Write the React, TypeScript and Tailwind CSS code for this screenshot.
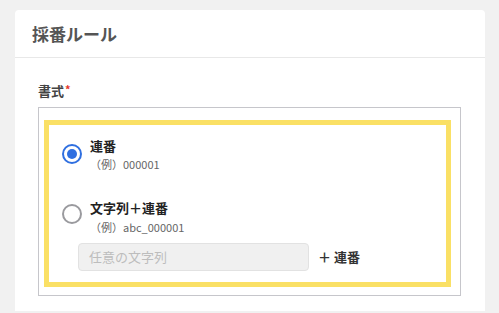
import React from 'react'

const font = { fontFamily: '"Noto Sans CJK JP", "Noto Sans", sans-serif' }

function Radio({ checked }: { checked?: boolean }) {
  return checked ? (
    <div className="w-[20px] h-[20px] rounded-full border-2 border-[#2f6fe0] flex items-center justify-center shrink-0">
      <div className="w-[10px] h-[10px] rounded-full bg-[#2f6fe0]" />
    </div>
  ) : (
    <div className="w-[20px] h-[20px] rounded-full border-2 border-[#9a9a9e] shrink-0" />
  )
}

export default function App() {
  return (
    <div className="w-[499px] h-[313px] bg-[#f1f1f1] pt-[10px] pl-[15px] pr-[14px] overflow-hidden" style={font}>
      <div className="bg-white rounded-t-[4px] h-[301px]">
        <div className="h-[48px] border-b border-[#e8e8e8] px-[17px] flex items-center">
          <h1 className="text-[17px] font-bold text-[#555] leading-none">採番ルール</h1>
        </div>

        <div className="pl-[23px] pr-[24px] pt-[24px]">
          <div className="flex items-start text-[13px] font-bold text-[#444] leading-[18px]">
            書式<span className="text-[#e5372a] text-[11px] leading-[14px] ml-[1px]">*</span>
          </div>

          <div className="mt-[7px] border border-[#c6c6cb] pt-[12px] pl-[5px] pr-[9px] pb-[8px]">
            <div className="border-[5px] border-[#fae065] pl-[13px] pt-[12px] pb-[11px]">
              <div className="flex items-start gap-[8px]">
                <div className="mt-[7px]"><Radio checked /></div>
                <div>
                  <div className="text-[13px] font-bold text-[#222] leading-[18px]">連番</div>
                  <div className="text-[11px] text-[#666] leading-[16px] mt-[1px]">（例）000001</div>
                </div>
              </div>

              <div className="flex items-start gap-[8px] mt-[27px]">
                <div className="mt-[5px]"><Radio /></div>
                <div>
                  <div className="text-[13px] font-bold text-[#222] leading-[18px]">文字列＋連番</div>
                  <div className="text-[11px] text-[#666] leading-[16px] mt-[2px]">（例）abc_000001</div>
                </div>
              </div>

              <div className="flex items-center mt-[8px] ml-[16px]">
                <div className="w-[231px] h-[28px] rounded-[4px] bg-[#f0f0f0] border border-[#e2e2e2] flex items-center px-[10px] text-[13px] text-[#bdbdbd]">
                  任意の文字列
                </div>
                <span className="ml-[9px] text-[13px] font-bold text-[#333]">＋ 連番</span>
              </div>
            </div>
          </div>
        </div>
      </div>
    </div>
  )
}
